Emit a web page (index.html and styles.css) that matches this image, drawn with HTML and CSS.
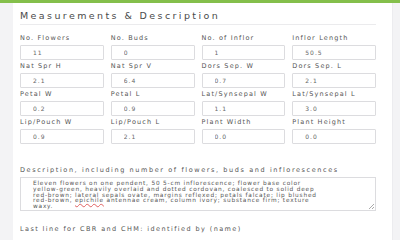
FILE: index.html
```html
<!DOCTYPE html>
<html lang="en">
<head>
    <meta charset="UTF-8">
    <title>Measurements &amp; Description</title>
    <link rel="stylesheet" href="styles.css">
</head>
<body>
    <div class="topbar"></div>
    <div class="card">
        <h2>Measurements &amp; Description</h2>

        <div class="grid">
            <div class="field"><label>No. Flowers</label><input type="text" value="11"></div>
            <div class="field"><label>No. Buds</label><input type="text" value="0"></div>
            <div class="field"><label>No. of Inflor</label><input type="text" value="1"></div>
            <div class="field"><label>Inflor Length</label><input type="text" value="50.5"></div>

            <div class="field"><label>Nat Spr H</label><input type="text" value="2.1"></div>
            <div class="field"><label>Nat Spr V</label><input type="text" value="6.4"></div>
            <div class="field"><label>Dors Sep. W</label><input type="text" value="0.7"></div>
            <div class="field"><label>Dors Sep. L</label><input type="text" value="2.1"></div>

            <div class="field"><label>Petal W</label><input type="text" value="0.2"></div>
            <div class="field"><label>Petal L</label><input type="text" value="0.9"></div>
            <div class="field"><label>Lat/Synsepal W</label><input type="text" value="1.1"></div>
            <div class="field"><label>Lat/Synsepal L</label><input type="text" value="3.0"></div>

            <div class="field"><label>Lip/Pouch W</label><input type="text" value="0.9"></div>
            <div class="field"><label>Lip/Pouch L</label><input type="text" value="2.1"></div>
            <div class="field"><label>Plant Width</label><input type="text" value="0.0"></div>
            <div class="field"><label>Plant Height</label><input type="text" value="0.0"></div>
        </div>

        <div class="desc">
            <label>Description, including number of flowers, buds and inflorescences</label>
            <div class="textarea">Eleven flowers on one pendent, 50 5-cm inflorescence; flower base color
yellow-green, heavily overlaid and dotted cordovan, coalesced to solid deep
red-brown; lateral sepals ovate, margins reflexed; petals falcate; lip blushed
red-brown, <span class="typo">epichile</span> antennae cream, column ivory; substance firm; texture
waxy.</div>
        </div>

        <div class="lastline">Last line for CBR and CHM: identified by (name)</div>
    </div>
</body>
</html>
```

FILE: styles.css
```css
body {
    margin: 0;
    background: #f3f3f5;
    font-family: 'DejaVu Sans', 'Liberation Sans', sans-serif;
    color: #555;
    height: 240px;
    overflow: hidden;
}
.topbar {
    height: 3px;
    background: #84bf4b;
}
.card {
    margin-left: 13px;
    width: 380px;
    background: #fff;
    padding: 7px 16px 10px 7px;
    box-sizing: border-box;
    border-right: 1px solid #ececef;
}
h2 {
    margin: 0;
    font-size: 9.5px;
    font-weight: normal;
    letter-spacing: 2.4px;
    color: #4a4a4a;
    line-height: 12px;
    padding-bottom: 2px;
    border-bottom: 1px solid #ebebed;
    white-space: nowrap;
}
.grid {
    display: grid;
    grid-template-columns: repeat(4, 1fr);
    column-gap: 7px;
    row-gap: 3px;
    margin-top: 10px;
}
.field label {
    display: block;
    font-size: 6.5px;
    line-height: 7px;
    letter-spacing: 1.15px;
    color: #555;
    margin-bottom: 3px;
    white-space: nowrap;
}
.field input {
    display: block;
    width: 100%;
    box-sizing: border-box;
    height: 15px;
    border: 1px solid #dcdcdf;
    border-radius: 1px;
    padding: 0 0 0 12px;
    font-family: inherit;
    font-size: 6px;
    letter-spacing: 1px;
    color: #666;
    background: #fff;
}
.desc {
    margin-top: 23px;
}
.desc label {
    display: block;
    font-size: 6.5px;
    line-height: 7px;
    letter-spacing: 1.6px;
    margin-bottom: 3px;
    white-space: nowrap;
}
.textarea {
    position: relative;
    border: 1px solid #dcdcdf;
    height: 34px;
    box-sizing: border-box;
    padding: 3px 8px 0 12px;
    font-size: 5.8px;
    line-height: 5.8px;
    letter-spacing: 0.8px;
    color: #555;
    white-space: pre;
    overflow: hidden;
}
.textarea::after {
    content: '';
    position: absolute;
    right: 1px;
    bottom: 1px;
    width: 5px;
    height: 5px;
    background: linear-gradient(135deg, transparent 45%, #aaa 45%, #aaa 55%, transparent 55%, transparent 75%, #aaa 75%, #aaa 85%, transparent 85%);
}
.typo {
    text-decoration: underline wavy #e06060;
    text-decoration-thickness: 0.5px;
}
.lastline {
    margin-top: 15px;
    font-size: 6.5px;
    line-height: 7px;
    letter-spacing: 1.4px;
    white-space: nowrap;
}
```
